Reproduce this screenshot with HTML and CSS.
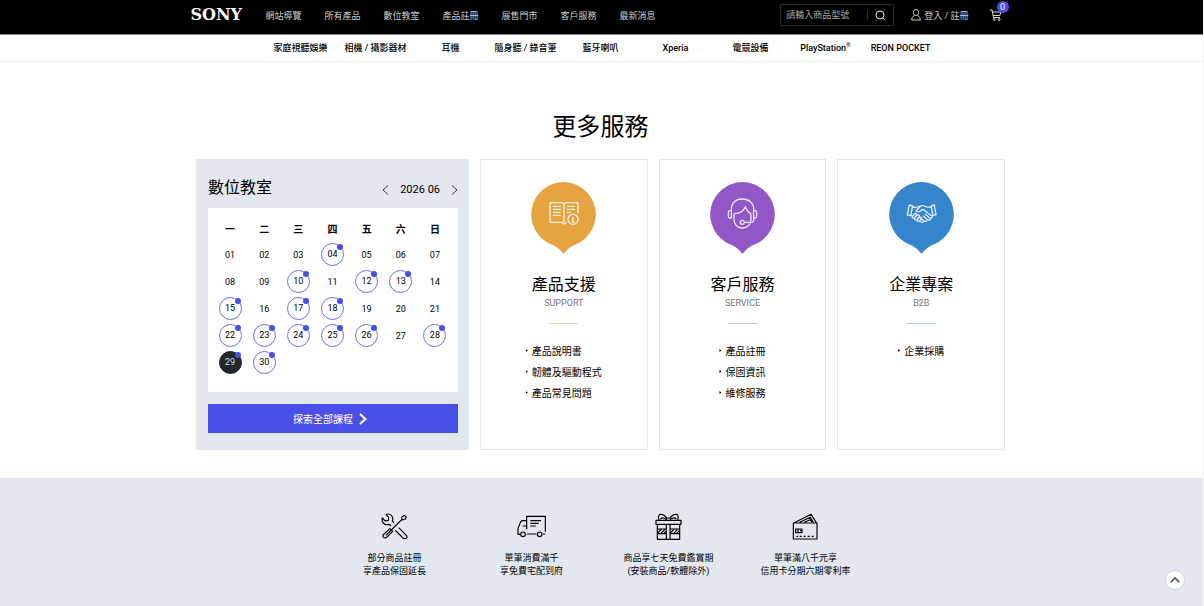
FILE: index.html
```html
<!DOCTYPE html>
<html lang="zh-Hant">
<head>
<meta charset="utf-8">
<meta name="viewport" content="width=device-width, initial-scale=1">
<title>Sony 更多服務</title>
<link rel="stylesheet" href="styles.css">
</head>
<body>
<header class="topbar">
  <div class="topbar-inner">
    <a class="logo" href="#">SONY</a>
    <nav class="main-nav" aria-label="主選單">
      <a href="#">網站導覽</a><a href="#">所有產品</a><a href="#">數位教室</a><a href="#">產品註冊</a><a href="#">展售門市</a><a href="#">客戶服務</a><a href="#">最新消息</a>
    </nav>
    <form class="search">
      <input type="text" aria-label="搜尋商品" placeholder="請輸入商品型號">
      <button type="button" aria-label="搜尋">
        <svg width="11" height="11" viewBox="0 0 11 11"><circle cx="5" cy="5" r="4"/><path d="M8 8l2.300 2.300"/></svg>
      </button>
    </form>
    <a class="login" href="#">
      <svg width="10" height="12" viewBox="0 0 10 12"><ellipse cx="5" cy="3.500" rx="2.600" ry="3"/><path d="M3.500 6.300C1.500 7.500.8 9 .7 11h8.600C9.200 9 8.500 7.500 6.500 6.300"/></svg>
      登入 / 註冊
    </a>
    <a class="cart" href="#" aria-label="購物車">
      <svg width="12" height="12" viewBox="0 0 12 12"><path d="M0 1h2l1.500 7.500H10M2.300 3H11L9.800 6.500H3.200"/><circle cx="4.200" cy="10.500" r=".9"/><circle cx="9.200" cy="10.500" r=".9"/></svg>
      <span class="badge">0</span>
    </a>
  </div>
</header>
<nav class="sub-nav" aria-label="產品分類">
  <a href="#">家庭視聽娛樂</a><a href="#">相機 / 攝影器材</a><a href="#">耳機</a><a href="#">隨身聽 / 錄音筆</a><a href="#">藍牙喇叭</a><a href="#">Xperia</a><a href="#">電競設備</a><a href="#">PlayStation<sup>®</sup></a><a href="#">REON POCKET</a>
</nav>

<main class="services">
  <h1>更多服務</h1>
  <div class="service-grid">
    <section class="classroom">
      <div class="classroom-head">
        <h2>數位教室</h2>
        <div class="month">
          <button type="button" aria-label="上個月"><svg width="7" height="10" viewBox="0 0 7 10"><path d="M6 .5L1 5l5 4.500"/></svg></button>
          <span>2026 06</span>
          <button type="button" aria-label="下個月"><svg width="7" height="10" viewBox="0 0 7 10"><path d="M1 .5L6 5 1 9.500"/></svg></button>
        </div>
      </div>
      <div class="calendar">
        <table>
          <thead><tr><th>一</th><th>二</th><th>三</th><th>四</th><th>五</th><th>六</th><th>日</th></tr></thead>
          <tbody>
            <tr><td>01</td><td>02</td><td>03</td><td><a class="event" href="#">04</a></td><td>05</td><td>06</td><td>07</td></tr>
            <tr><td>08</td><td>09</td><td><a class="event" href="#">10</a></td><td>11</td><td><a class="event" href="#">12</a></td><td><a class="event" href="#">13</a></td><td>14</td></tr>
            <tr><td><a class="event" href="#">15</a></td><td>16</td><td><a class="event" href="#">17</a></td><td><a class="event" href="#">18</a></td><td>19</td><td>20</td><td>21</td></tr>
            <tr><td><a class="event" href="#">22</a></td><td><a class="event" href="#">23</a></td><td><a class="event" href="#">24</a></td><td><a class="event" href="#">25</a></td><td><a class="event" href="#">26</a></td><td>27</td><td><a class="event" href="#">28</a></td></tr>
            <tr><td><a class="event today" href="#">29</a></td><td><a class="event" href="#">30</a></td><td></td><td></td><td></td><td></td><td></td></tr>
          </tbody>
        </table>
      </div>
      <a class="explore" href="#">探索全部課程 <svg width="8" height="12" viewBox="0 0 8 12"><path d="M1 1l5.500 5L1 11"/></svg></a>
    </section>

    <section class="card support">
      <svg class="pin" width="65" height="72" viewBox="0 0 195 216">
        <path class="drop" d="M97.500 0a97.500 97.500 0 0 1 38 187Q114 195 97.500 215 81 195 59.500 187A97.500 97.500 0 0 1 97.500 0z"/>
        <g class="glyph" transform="translate(-168 -246)">
          <path d="M309 340V308H272L267 313 262 308H225V367H260L267 372 275 367M267 313V366M234 319H257M234 328H257M234 337H257M234 346H257M276 319H300M276 328H300M276 337H288"/>
          <circle cx="294" cy="358" r="15"/><path d="M294 350v3M291 356h3v10M290 366h8"/>
        </g>
      </svg>
      <h2>產品支援</h2>
      <p>SUPPORT</p>
      <hr>
      <ul><li><a href="#">產品說明書</a></li><li><a href="#">韌體及驅動程式</a></li><li><a href="#">產品常見問題</a></li></ul>
    </section>

    <section class="card service">
      <svg class="pin" width="65" height="72" viewBox="0 0 195 216">
        <path class="drop" d="M97.500 0a97.500 97.500 0 0 1 38 187Q114 195 97.500 215 81 195 59.500 187A97.500 97.500 0 0 1 97.500 0z"/>
        <g class="glyph" transform="translate(-705 -246)">
          <path d="M769 333V328C769 308 783 297 802 297S836 308 836 328V333M769 332H764Q760 332 760 337V349Q760 354 764 354H769ZM836 332H841Q845 332 845 337V349Q845 354 841 354H836ZM777 341V358C777 374 788 384 802 384S828 374 828 358V341M777 341C795 340 807 332 811 320 815 331 820 337 828 341M836 354V360Q836 367 829 367H808"/>
          <circle cx="802" cy="367" r="6"/>
        </g>
      </svg>
      <h2>客戶服務</h2>
      <p>SERVICE</p>
      <hr>
      <ul><li><a href="#">產品註冊</a></li><li><a href="#">保固資訊</a></li><li><a href="#">維修服務</a></li></ul>
    </section>

    <section class="card business">
      <svg class="pin" width="65" height="72" viewBox="0 0 195 216">
        <path class="drop" d="M97.500 0a97.500 97.500 0 0 1 38 187Q114 195 97.500 215 81 195 59.500 187A97.500 97.500 0 0 1 97.500 0z"/>
        <g class="glyph" transform="translate(-444 -96)">
          <path d="M505 165L515 168 509 197 499 195ZM580 165L570 168 576 197 585 194ZM515 171Q527 174 536 168M570 171Q558 173 550 168 543 165 537 170L525 182Q531 189 540 182L546 178 571 197Q576 203 569 206L552 192M569 206Q566 213 559 209L546 197M559 209Q555 217 549 213L539 203M549 213Q544 220 538 214M509 194L515 199M576 194L572 198"/>
          <path d="M514 199L521 191Q527 189 527 195L520 204Q513 206 514 199ZM520 204L530 195Q537 194 535 200L528 209Q520 211 520 204ZM528 209L536 201Q542 201 541 207L535 214Q529 216 528 209Z"/>
        </g>
      </svg>
      <h2>企業專案</h2>
      <p>B2B</p>
      <hr>
      <ul><li><a href="#">企業採購</a></li></ul>
    </section>
  </div>
</main>

<section class="benefits">
  <ul>
    <li>
      <svg width="27" height="27" viewBox="79 39 81 81"><path d="M94 44Q103 39 110 46 117 53 113 63L118 68M132 83L156 107Q159 113 152 116 147 117 145 114L122 91M109 78L104 73Q93 77 86 69 80 62 83 54L92 63 101 61 102 52 94 44M142 58L116 84M142 58L141 52 148 46 155 50 152 57 144 60ZM116 84L94 106M106 86L114 94 96 112Q90 116 86 111 83 106 88 102ZM150 107h1"/></svg>
      <span>部分商品註冊<br>享產品保固延長</span>
    </li>
    <li>
      <svg width="29" height="27" viewBox="486 39 87 81"><path d="M515 88V49H571V95M564 102H571M515 62H502Q497 63 495 70L489 86V103H496M503 78H515M515 102H544M526 62H558M526 70H551M526 78H542"/><circle cx="504" cy="103" r="7"/><circle cx="554" cy="103" r="7"/></svg>
      <span>單筆消費滿千<br>享免費宅配到府</span>
    </li>
    <li>
      <svg width="27" height="27" viewBox="135 39 81 81"><path d="M138 61H213V73H138ZM142 73V118H209V73M169 73V118M180 73V118M169 54H181V61H169ZM171 56Q163 42 151 43 142 48 147 60M169 58Q159 50 151 56M179 56Q187 42 199 43 208 48 203 60M181 58Q191 50 199 56M142 87H169M142 101H169M180 87H209M180 101H209M143 99L154 88M153 100L164 89M162 100L169 93M181 99L192 88M191 100L202 89M200 100L209 91"/></svg>
      <span>商品享七天免費鑑賞期<br>(安裝商品/軟體除外)</span>
    </li>
    <li>
      <svg width="27" height="27" viewBox="545 39 81 81"><path d="M549 69H620V117H549ZM552 68L602 43 618 68M568 67L600 52 609 67M582 67L600 59 604 66M556 87H575V98H556ZM563 88V97M569 92H574M558 109H563M568 109H574M580 109H586M592 109H598M604 109H610"/></svg>
      <span>單筆滿八千元享<br>信用卡分期六期零利率</span>
    </li>
  </ul>
</section>
<button class="to-top" type="button" aria-label="回到頂端"><svg width="10" height="6" viewBox="0 0 10 6"><path d="M.7 5.300L5 1l4.300 4.300"/></svg></button>
</body>
</html>
```
FILE: styles.css
```css
* { box-sizing: border-box; }
body {
  margin: 0;
  border-right: 1px solid #f4f4f6;
  background: #fff;
  color: #000;
  font-family: Roboto, "Noto Sans CJK TC", sans-serif;
  font-size: 9px;
}
a { color: inherit; text-decoration: none; }
button { padding: 0; border: 0; background: none; color: inherit; font: inherit; }
h1, h2, p, ul { margin: 0; padding: 0; font-weight: 400; }
ul { list-style: none; }
svg { display: block; fill: none; stroke: currentColor; }

.topbar { background: #000; color: #ccc; border-bottom: 1px solid #888; }
.topbar-inner {
  display: flex;
  align-items: center;
  max-width: 822px;
  height: 34px;
  margin: 0 auto;
  padding-bottom: 4px;
}
.logo {
  width: 75px;
  color: #fff;
  font: 700 16px/20px "DejaVu Serif", serif;
}
.main-nav { display: flex; gap: 23px; }
.search {
  display: flex;
  align-items: center;
  width: 114px;
  height: 22px;
  margin-left: auto;
  border: 1px solid #2b2b2b;
  border-radius: 1px;
}
.search input {
  flex: 1;
  min-width: 0;
  padding: 0 0 0 5px;
  border: 0;
  outline: 0;
  background: transparent;
  color: #ccc;
  font: inherit;
}
.search input::placeholder { color: #aaa; opacity: 1; }
.search button {
  display: grid;
  place-items: center;
  width: 26px;
  height: 10px;
  border-left: 1px solid #2b2b2b;
  color: #ddd;
}
.login { display: flex; align-items: center; gap: 3px; margin-left: 17px; }
.cart { position: relative; margin: 0 11px 0 21px; color: #ddd; }
.badge {
  position: absolute;
  top: -8px;
  left: 7px;
  width: 12px;
  height: 12px;
  border-radius: 50%;
  background: #464de8;
  color: #fff;
  line-height: 12px;
  text-align: center;
}

.sub-nav {
  display: grid;
  grid-template-columns: repeat(9, 75px);
  justify-content: center;
  padding-right: 2px;
  border-bottom: 1px solid #ececee;
  font-weight: 500;
  line-height: 26px;
  text-align: center;
  white-space: nowrap;
}
.sub-nav sup { font-size: 6px; line-height: 0; }

.services { max-width: 811px; margin: 0 auto; padding: 47px 2px 28px 0; }
.services h1 { font-size: 24px; line-height: 36px; text-align: center; }
.service-grid {
  display: grid;
  grid-template-columns: 273px repeat(3, 1fr);
  gap: 11px;
  margin-top: 14px;
}
.service-grid h2 { font-size: 16px; line-height: 24px; }

.classroom { padding: 17px 11px 17px 12px; background: #e3e7ee; }
.classroom-head { display: flex; justify-content: space-between; height: 32px; }
.month {
  display: flex;
  align-items: center;
  gap: 11px;
  height: 27px;
  font-size: 11px;
}
.month button { color: #444; }
.calendar { padding: 9px 6px 16px 5px; background: #fff; }
.calendar table { width: 100%; table-layout: fixed; border-collapse: collapse; text-align: center; }
.calendar th { height: 22px; padding: 0; font-size: 10px; font-weight: 700; }
.calendar tbody::before { content: ""; display: table-row; height: 2px; }
.calendar td { height: 27px; padding: 0; }
.event {
  display: block;
  position: relative;
  width: 23px;
  height: 23px;
  margin: 0 auto;
  border: 1px solid #6a70ee;
  border-radius: 50%;
  line-height: 21px;
}
.event::after {
  content: "";
  position: absolute;
  top: 0;
  right: 0;
  width: 6px;
  height: 6px;
  border-radius: 50%;
  background: #464de8;
}
.today { border-color: #22272d; background: #22272d; color: #ddd; }
.explore {
  display: flex;
  align-items: center;
  justify-content: center;
  gap: 6px;
  height: 29px;
  margin-top: 12px;
  padding-right: 6px;
  background: #4a4fe8;
  color: #fff;
  font-size: 10px;
}
.explore svg { stroke-width: 2; }

.card {
  padding: 22px 0 40px;
  border: 1px solid #e6e6ea;
  text-align: center;
}
.pin { margin: 0 auto 19px; }
.drop { stroke: none; }
.glyph { stroke: #fff; stroke-width: 4; stroke-linejoin: round; opacity: .85; }
.card p { color: #777; line-height: 12px; }
.card hr { width: 29px; margin: 14px auto 17px; border: 0; border-top: 1px solid; }
.card ul { display: inline-block; font-size: 10px; line-height: 21px; text-align: left; }
.card li { display: flex; gap: 4px; }
.card li::before {
  content: "";
  width: 2px;
  height: 3px;
  margin-top: 8px;
  background: #000;
  clip-path: polygon(0 0, 100% 50%, 0 100%);
}
.support .drop { fill: #e6a441; }
.support hr { color: #efd8a9; }
.service .drop { fill: #9256c6; }
.service hr { color: #cdb7df; }
.business .drop { fill: #3485cb; }
.business hr { color: #a4cbe5; }

.benefits { min-height: 128px; padding: 35px 3px 28px 0; background: #e3e7ee; }
.benefits ul { display: grid; grid-template-columns: repeat(4, 137px); justify-content: center; }
.benefits li { line-height: 13px; text-align: center; }
.benefits svg { margin: 0 auto 12px; stroke-width: 3.500; stroke-linejoin: round; }

.to-top {
  display: grid;
  place-items: center;
  position: fixed;
  right: 19px;
  bottom: 16px;
  width: 20px;
  height: 20px;
  border: 1px solid #d0d2d6;
  border-radius: 50%;
  background: #fff;
  color: #444;
}
.to-top svg { stroke-width: 1.500; }
```
